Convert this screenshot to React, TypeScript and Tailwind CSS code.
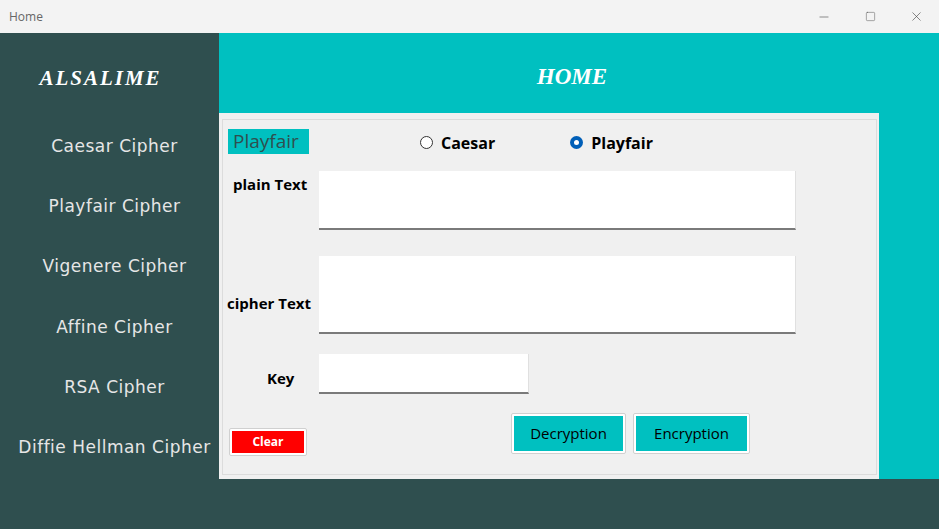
import { Minus, Square, X } from "lucide-react";

const menu = [
  "Caesar Cipher",
  "Playfair Cipher",
  "Vigenere Cipher",
  "Affine Cipher",
  "RSA Cipher",
  "Diffie Hellman Cipher",
];

const Radio: React.FC<{ label: string; checked?: boolean }> = ({ label, checked }) => (
  <div className="flex items-center gap-[8px]">
    {checked ? (
      <span className="flex h-[13px] w-[13px] items-center justify-center rounded-full bg-[#005fb8]">
        <span className="h-[5px] w-[5px] rounded-full bg-white" />
      </span>
    ) : (
      <span className="h-[13px] w-[13px] rounded-full border border-[#333] bg-white" />
    )}
    <span className="text-[16px] font-bold text-black">{label}</span>
  </div>
);

const App: React.FC = () => {
  return (
    <div className="flex h-[529px] w-[939px] flex-col overflow-hidden font-['Open_Sans',sans-serif]">
      {/* title bar */}
      <div className="flex h-[33px] items-center justify-between bg-[#f3f3f3] pl-[9px]">
        <span className="text-[12px] text-[#666]">Home</span>
        <div className="flex h-full items-center text-[#444]">
          <div className="flex w-[46px] justify-center">
            <Minus size={14} strokeWidth={1} />
          </div>
          <div className="flex w-[46px] justify-center">
            <Square size={11} strokeWidth={1} />
          </div>
          <div className="flex w-[46px] justify-center">
            <X size={15} strokeWidth={1} />
          </div>
        </div>
      </div>

      <div className="flex flex-1">
        {/* sidebar */}
        <div className="flex w-[219px] flex-col items-center bg-[#2f4f4f] pl-[10px]">
          <div className="mt-[30px] mr-[28px] font-['Liberation_Serif',serif] text-[21px] font-bold italic tracking-[2px] text-white">
            ALSALIME
          </div>
          <div className="mt-[22px] flex flex-col">
            {menu.map((m) => (
              <div
                key={m}
                className="flex h-[60.3px] items-center justify-center font-['DejaVu_Sans',sans-serif] text-[17px] tracking-[0.5px] text-[#e6e6e6]"
              >
                {m}
              </div>
            ))}
          </div>
        </div>

        {/* right side */}
        <div className="flex flex-1 flex-col">
          <div className="flex h-[446px] flex-col bg-[#00c0c0]">
            <div className="flex h-[80px] items-center justify-center pr-[14px] pt-[9px] font-['Liberation_Serif',serif] text-[23px] font-bold italic text-white">
              HOME
            </div>
            <div className="flex flex-1">
              <div className="h-[366px] w-[660px] bg-[#f0f0f0] pt-[6px] pr-[2px] pb-[4px] pl-[3px]">
                <div className="flex h-full flex-col border border-[#dcdcdc]">
                  {/* header row */}
                  <div className="mt-[9px] flex h-[25px] items-center">
                    <div className="ml-[5px] flex h-[25px] w-[81px] items-center bg-[#00c0c0] pl-[5px] text-[19px] leading-none text-[#2f4f4f]">
                      Playfair
                    </div>
                    <div className="ml-[111px] mt-[2px]">
                      <Radio label="Caesar" />
                    </div>
                    <div className="ml-[75px] mt-[2px]">
                      <Radio label="Playfair" checked />
                    </div>
                  </div>

                  {/* plain text */}
                  <div className="mt-[17px] flex">
                    <div className="ml-[10px] w-[86px] pt-[2px] text-[15px] font-bold text-black">plain Text</div>
                    <div className="h-[59px] w-[477px] border-r border-b-2 border-r-[#e0e0e0] border-b-[#7a7a7a] bg-white" />
                  </div>

                  {/* cipher text */}
                  <div className="mt-[26px] flex">
                    <div className="ml-[4px] flex w-[92px] items-end pb-[20px] text-[15px] font-bold text-black">
                      cipher Text
                    </div>
                    <div className="h-[78px] w-[477px] border-r border-b-2 border-r-[#e0e0e0] border-b-[#7a7a7a] bg-white" />
                  </div>

                  {/* key */}
                  <div className="mt-[20px] flex">
                    <div className="ml-[44px] flex w-[52px] items-end pb-[5px] text-[15px] font-bold text-black">Key</div>
                    <div className="h-[40px] w-[210px] border-r border-b-2 border-r-[#e0e0e0] border-b-[#7a7a7a] bg-white" />
                  </div>

                  {/* buttons */}
                  <div className="mt-[19px] flex items-start">
                    <div className="mt-[15px] ml-[6px] flex h-[28px] w-[78px] items-center justify-center rounded-[2px] border border-[#d0d0d0] bg-white p-[2px]">
                      <div className="flex h-full w-full items-center justify-center bg-[#ff0000] text-[12px] font-bold text-white">
                        Clear
                      </div>
                    </div>
                    <div className="ml-[204px] flex h-[41px] w-[115px] rounded-[2px] border border-[#d0d0d0] bg-white p-[2px]">
                      <div className="flex h-full w-full items-center justify-center bg-[#00c0c0] text-[15px] text-black">
                        Decryption
                      </div>
                    </div>
                    <div className="ml-[7px] flex h-[41px] w-[117px] rounded-[2px] border border-[#d0d0d0] bg-white p-[2px]">
                      <div className="flex h-full w-full items-center justify-center bg-[#00c0c0] text-[15px] text-black">
                        Encryption
                      </div>
                    </div>
                  </div>
                </div>
              </div>
            </div>
          </div>
          <div className="flex-1 bg-[#2f4f4f]" />
        </div>
      </div>
    </div>
  );
};

export default App;
